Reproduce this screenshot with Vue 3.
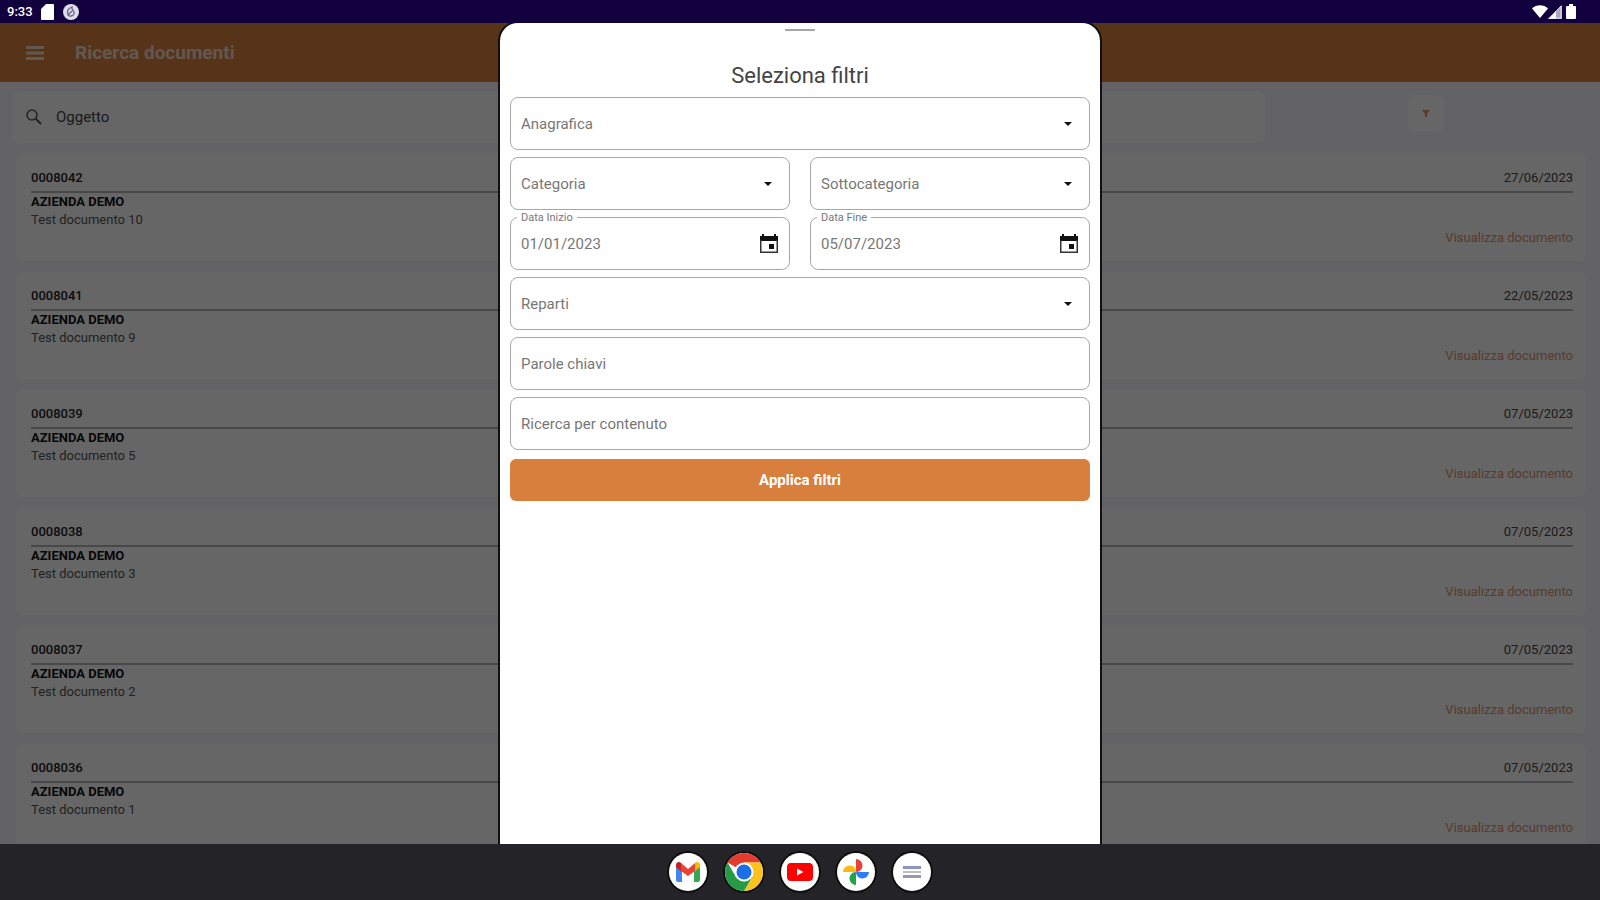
<template>
  <div class="device">
    <header class="status-bar">
      <div class="status-left">
        <span class="clock">9:33</span>
        <svg class="sd-icon" viewBox="0 0 13 16" aria-hidden="true">
          <path d="M5 0h7a1 1 0 0 1 1 1v14a1 1 0 0 1-1 1H1a1 1 0 0 1-1-1V5z" fill="#fff" />
        </svg>
        <svg class="app-icon" viewBox="0 0 16 16" aria-hidden="true">
          <circle cx="8" cy="8" r="8" fill="#dedce8" />
          <path d="M5 11c-2-4 1-7 4-8-1 3 3 4 2 7-1 2-4 3-6 1zm0 0 4-4" fill="none" stroke="#6a6385" stroke-width="1.3" />
        </svg>
      </div>
      <div class="status-right">
        <svg class="wifi-icon" viewBox="0 0 16 13" aria-hidden="true">
          <path d="M0 3.5C4.500-.8 11.500-.8 16 3.500L8 13z" fill="#fff" />
        </svg>
        <svg class="signal-icon" viewBox="0 0 14 14" aria-hidden="true">
          <path d="M14 0v14H0z" fill="#a9a5bb" />
          <path d="M8 6v8H0z" fill="#fff" />
          <path d="M13 1v12H2z" fill="none" stroke="#e6e4ee" />
        </svg>
        <svg class="battery-icon" viewBox="0 0 10 15" aria-hidden="true">
          <path d="M3 0h4v2h2a1 1 0 0 1 1 1v11a1 1 0 0 1-1 1H1a1 1 0 0 1-1-1V3a1 1 0 0 1 1-1h2z" fill="#fff" />
        </svg>
      </div>
    </header>

    <div class="screen">
      <div class="page">
        <div class="app-bar">
          <button class="menu-btn" type="button" aria-label="Menu">
            <svg viewBox="0 0 18 14" aria-hidden="true">
              <path d="M0 1.500h18M0 7h18M0 12.500h18" stroke="#f3ddcf" stroke-width="3" />
            </svg>
          </button>
          <h1>Ricerca documenti</h1>
        </div>

        <div class="search-row">
          <div class="search-box">
            <svg class="search-icon" viewBox="0 0 16 16" aria-hidden="true">
              <circle cx="6" cy="6" r="5" fill="none" stroke="#555" stroke-width="1.500" />
              <path d="M9.700 9.700 15 15" stroke="#555" stroke-width="2" />
            </svg>
            <input v-model="query" type="text" placeholder="Oggetto" aria-label="Oggetto">
          </div>
          <div class="filter-cell">
            <button class="filter-btn" type="button" aria-label="Filtri">
              <svg viewBox="0 0 8 8" aria-hidden="true">
                <path d="M0 1h8L5 5v3H3V5z" fill="#dd9468" />
              </svg>
            </button>
          </div>
        </div>

        <ul class="documents">
          <li v-for="doc in documents" :key="doc.code" class="document">
            <div class="document-head">
              <span class="code">{{ doc.code }}</span>
              <span class="date">{{ doc.date }}</span>
            </div>
            <div class="company">AZIENDA DEMO</div>
            <div class="subject">{{ doc.subject }}</div>
            <a class="view-link" href="#">Visualizza documento</a>
          </li>
        </ul>
      </div>

      <div class="backdrop">
        <form class="sheet" @submit.prevent>
          <div class="handle"></div>
          <h2>Seleziona filtri</h2>

          <div class="fields">
            <div v-for="field in fields" :key="field.id" class="field" :class="{ half: field.half }">
              <template v-if="field.type === 'select'">
                <select :id="field.id" v-model="filters[field.id]" :aria-label="field.label">
                  <option value="">{{ field.label }}</option>
                </select>
                <svg class="arrow" viewBox="0 0 8 4" aria-hidden="true">
                  <path d="M0 0h8L4 4z" fill="#111" />
                </svg>
              </template>
              <template v-else-if="field.type === 'date'">
                <label class="float-label" :for="field.id">{{ field.label }}</label>
                <input :id="field.id" v-model="filters[field.id]" type="text">
                <button class="calendar-btn" type="button" aria-label="Apri calendario">
                  <svg viewBox="0 0 20 20" aria-hidden="true">
                    <path d="M3 0h2v2h10V0h2v2h2v5H1V2h2z" fill="#111" />
                    <path d="M1.750 6v12.250h16.500V6" fill="none" stroke="#333" stroke-width="1.500" />
                    <path d="M10 10h5v5h-5z" fill="#111" />
                  </svg>
                </button>
              </template>
              <input
                v-else
                :id="field.id"
                v-model="filters[field.id]"
                type="text"
                :placeholder="field.label"
                :aria-label="field.label"
              >
            </div>
          </div>

          <button class="apply-btn" type="submit">Applica filtri</button>
        </form>
      </div>
    </div>

    <nav class="dock">
      <button class="dock-app" type="button" aria-label="Gmail">
        <svg viewBox="0 0 38 38" aria-hidden="true">
          <path d="M7 12v15a2 2 0 0 0 2 2h4V17z" fill="#4285f4" />
          <path d="M31 12v15a2 2 0 0 1-2 2h-4V17z" fill="#34a853" />
          <path d="M25 12v7l6-5v-2c0-3-3-4-5-2z" fill="#fbbc04" />
          <path d="M13 12v7l-6-5v-2c0-3 3-4 5-2z" fill="#c5221f" />
          <path d="M12 10l7 6 7-6v8l-7 5-7-5z" fill="#ea4335" />
        </svg>
      </button>
      <button class="dock-app" type="button" aria-label="Chrome">
        <svg viewBox="0 0 38 38" aria-hidden="true">
          <path d="M19 19 2.550 9.500A19 19 0 0 1 35.450 9.500H19z" fill="#e33b2e" />
          <path d="M19 9.500h16.450A19 19 0 0 1 19 38l8.200-14.250z" fill="#fcc31e" />
          <path d="M2.550 9.500 10.800 23.750 19 28.500 27.200 23.750 19 38A19 19 0 0 1 2.550 9.500z" fill="#259b46" />
          <circle cx="19" cy="19" r="9.500" fill="#fff" />
          <circle cx="19" cy="19" r="7.500" fill="#1a6fe8" />
        </svg>
      </button>
      <button class="dock-app" type="button" aria-label="YouTube">
        <svg viewBox="0 0 38 38" aria-hidden="true">
          <rect x="6" y="10" width="26" height="18" rx="4" fill="#f00" />
          <path d="M16 15.500v7l6.500-3.500z" fill="#fff" />
        </svg>
      </button>
      <button class="dock-app" type="button" aria-label="Foto">
        <svg viewBox="0 0 38 38" aria-hidden="true">
          <path d="M19 19V6a6.500 6.500 0 0 1 6.500 6.500c0 3-2 6.500-6.500 6.500z" fill="#ea4335" />
          <path d="M19 19h13a6.500 6.500 0 0 1-6.500 6.500c-3 0-6.500-2-6.500-6.500z" fill="#2f7cf6" />
          <path d="M19 19v13a6.500 6.500 0 0 1-6.500-6.500c0-3 2-6.500 6.500-6.500z" fill="#1fa548" />
          <path d="M19 19H6a6.500 6.500 0 0 1 6.500-6.500c3 0 6.500 2 6.500 6.500z" fill="#fbb914" />
        </svg>
      </button>
      <button class="dock-app" type="button" aria-label="Tutte le app">
        <svg viewBox="0 0 38 38" aria-hidden="true">
          <path d="M10 14.500h18" stroke="#8c96bd" stroke-width="3" />
          <path d="M10 19h18" stroke="#bcbcc8" stroke-width="2" />
          <path d="M10 23.500h18" stroke="#9a9aa8" stroke-width="3" />
        </svg>
      </button>
    </nav>
  </div>
</template>

<script setup>
import { ref, reactive } from 'vue'

const query = ref('')

const documents = ref([
  { code: '0008042', date: '27/06/2023', subject: 'Test documento 10' },
  { code: '0008041', date: '22/05/2023', subject: 'Test documento 9' },
  { code: '0008039', date: '07/05/2023', subject: 'Test documento 5' },
  { code: '0008038', date: '07/05/2023', subject: 'Test documento 3' },
  { code: '0008037', date: '07/05/2023', subject: 'Test documento 2' },
  { code: '0008036', date: '07/05/2023', subject: 'Test documento 1' }
])

// Campi del pannello filtri
const fields = [
  { id: 'anagrafica', label: 'Anagrafica', type: 'select' },
  { id: 'categoria', label: 'Categoria', type: 'select', half: true },
  { id: 'sottocategoria', label: 'Sottocategoria', type: 'select', half: true },
  { id: 'dataInizio', label: 'Data Inizio', type: 'date', half: true },
  { id: 'dataFine', label: 'Data Fine', type: 'date', half: true },
  { id: 'reparti', label: 'Reparti', type: 'select' },
  { id: 'parole', label: 'Parole chiavi', type: 'text' },
  { id: 'contenuto', label: 'Ricerca per contenuto', type: 'text' }
]

const filters = reactive({
  anagrafica: '',
  categoria: '',
  sottocategoria: '',
  dataInizio: '01/01/2023',
  dataFine: '05/07/2023',
  reparti: '',
  parole: '',
  contenuto: ''
})
</script>

<style>
body {
  margin: 0;
}
</style>

<style scoped>
.device {
  display: flex;
  flex-direction: column;
  height: 100vh;
  overflow: hidden;
  font-family: Roboto, "Liberation Sans", sans-serif;
}

.device * {
  box-sizing: border-box;
}

button {
  padding: 0;
  border: none;
  background: none;
  font-family: inherit;
}

input,
select {
  min-width: 0;
  padding: 0;
  border: none;
  outline: none;
  background: transparent;
  font-family: inherit;
}

svg {
  display: block;
}

/* Barra di stato */
.status-bar {
  display: flex;
  justify-content: space-between;
  flex: none;
  height: 23px;
  padding: 0 24px 0 7px;
  background: #12003e;
}

.status-left,
.status-right {
  display: flex;
  align-items: center;
}

.clock {
  width: 34px;
  color: #fff;
  font-size: 13px;
  font-weight: 500;
}

.sd-icon {
  width: 13px;
  height: 16px;
}

.app-icon {
  width: 16px;
  height: 16px;
  margin-left: 9px;
}

.wifi-icon {
  width: 16px;
  height: 13px;
}

.signal-icon {
  width: 14px;
  height: 14px;
}

.battery-icon {
  width: 10px;
  height: 15px;
  margin-left: 4px;
}

/* Pagina */
.screen {
  position: relative;
  flex: 1;
  min-height: 0;
  overflow: hidden;
}

.page {
  min-height: 100%;
  background: #f7f7fc;
}

.app-bar {
  display: flex;
  align-items: center;
  height: 59px;
  padding: 0 26px;
  gap: 31px;
  background: #d97f3d;
}

.menu-btn svg {
  width: 18px;
  height: 14px;
}

.app-bar h1 {
  margin: 0;
  color: #f3ddcf;
  font-size: 19px;
  font-weight: 700;
}

.search-row {
  display: grid;
  grid-template-columns: 1fr 322px;
  padding: 9px 13px 11px;
}

.search-box {
  display: flex;
  align-items: center;
  height: 52px;
  padding: 0 13px;
  gap: 14px;
  border-radius: 6px;
  background: #fff;
}

.search-icon {
  width: 16px;
  height: 16px;
}

.search-box input {
  flex: 1;
  font-size: 15px;
}

.search-box input::placeholder {
  color: #444;
}

.filter-cell {
  display: flex;
  justify-content: center;
  padding-top: 4px;
}

.filter-btn {
  display: flex;
  align-items: center;
  justify-content: center;
  width: 36px;
  height: 36px;
  border-radius: 6px;
  background: #fff;
}

.filter-btn svg {
  width: 8px;
  height: 8px;
}

.documents {
  display: flex;
  flex-direction: column;
  gap: 11px;
  margin: 0;
  padding: 0 14px 0 16px;
  list-style: none;
}

.document {
  display: flex;
  flex-direction: column;
  height: 107px;
  padding: 15px 13px 13px 15px;
  border-radius: 6px;
  background: #fff;
  font-size: 13px;
  line-height: 18px;
}

.document-head {
  display: flex;
  justify-content: space-between;
  height: 24px;
  border-bottom: 2px solid #b4b4b4;
}

.code {
  color: #222;
  font-weight: 500;
}

.date {
  color: #444;
}

.company {
  color: #111;
  font-weight: 700;
}

.subject {
  color: #555;
}

.view-link {
  align-self: flex-end;
  color: #dc9474;
  text-decoration: none;
}

/* Pannello filtri */
.backdrop {
  position: absolute;
  inset: 0;
  display: flex;
  justify-content: center;
  background: rgba(0, 0, 0, 0.6);
}

.sheet {
  width: 600px;
  max-width: 100%;
  padding: 6px 10px;
  border-radius: 18px 18px 0 0;
  background: #fff;
  box-shadow: 0 0 0 2px #101010;
}

.handle {
  width: 30px;
  height: 2px;
  margin: 0 auto;
  background: #aaa4a4;
}

.sheet h2 {
  margin: 31px 0 7px;
  color: #444;
  font-size: 22px;
  font-weight: 400;
  line-height: 28px;
  text-align: center;
}

.fields {
  display: grid;
  grid-template-columns: 1fr 1fr;
  gap: 7px 20px;
}

.field {
  position: relative;
  display: flex;
  align-items: center;
  grid-column: span 2;
  height: 53px;
  padding: 0 10px;
  border: 1px solid #a8a8a8;
  border-radius: 8px;
}

.field.half {
  grid-column: span 1;
}

.field input,
.field select {
  flex: 1;
  color: #777;
  font-size: 15px;
  appearance: none;
}

.field input::placeholder {
  color: #777;
}

.arrow {
  width: 8px;
  height: 4px;
  margin-right: 7px;
}

.calendar-btn svg {
  width: 20px;
  height: 20px;
}

.float-label {
  position: absolute;
  top: -7px;
  left: 6px;
  padding: 0 4px;
  background: #fff;
  color: #777;
  font-size: 11px;
  line-height: 14px;
}

.apply-btn {
  display: block;
  width: 100%;
  height: 42px;
  margin-top: 9px;
  border-radius: 6px;
  background: #d97f3d;
  color: #fff;
  font-size: 15px;
  font-weight: 700;
}

/* Dock */
.dock {
  display: flex;
  align-items: center;
  justify-content: center;
  flex: none;
  gap: 18px;
  height: 56px;
  background: #242428;
}

.dock-app {
  width: 38px;
  height: 38px;
  border-radius: 50%;
  background: #fff;
  box-shadow: 0 0 0 2px #101012;
}

.dock-app svg {
  width: 38px;
  height: 38px;
}
</style>
